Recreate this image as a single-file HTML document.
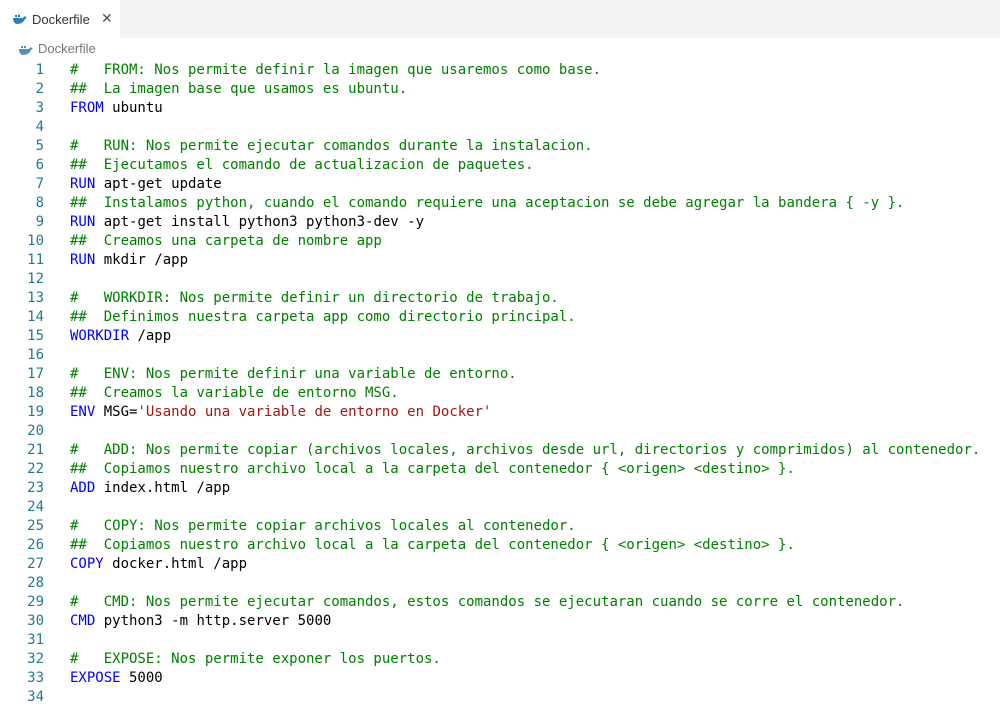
<!DOCTYPE html>
<html><head><meta charset="utf-8"><style>
body{margin:0;width:1000px;height:696px;overflow:hidden;background:#fff;font-family:"Liberation Sans",sans-serif;}
.tabs{height:38px;background:#f3f3f3;position:relative;}
.tab{position:absolute;left:0;top:0;width:120px;height:38px;background:#fff;font-size:13px;color:#333;}
.tab span{position:absolute;left:32px;top:12px;}
.tab .x{left:101px;top:11px;font-size:14px;color:#555;font-family:"DejaVu Sans",sans-serif;font-weight:normal;}
.crumb{position:absolute;top:41px;left:38px;font-size:13px;color:#777;}
.whale{position:absolute;}
.code{position:absolute;top:61px;left:0;font-family:"DejaVu Sans Mono",monospace;font-size:14px;}
.l{height:19px;line-height:19px;white-space:pre;position:relative;}
.n{position:absolute;left:0;width:44px;text-align:right;color:#237893;}
.t{position:absolute;left:70px;color:#000;}
.c{color:#008000}.k{color:#0000ff}.s{color:#a31515}
</style></head><body>
<div class="tabs"><div class="tab">
<svg class="whale" style="left:13px;top:14px" width="14" height="10" viewBox="0 0 14 10"><path d="M0 4h10c1-2 2-2 3-1l1 1c-1 0-2 1-2 1-1 3-4 5-8 5C2 10 0 8 0 4z" fill="#2b7fb5"/><rect x="2" y="1" width="2" height="2" fill="#2b7fb5"/><rect x="5" y="1" width="2" height="2" fill="#2b7fb5"/><rect x="5" y="-1" width="2" height="1.5" fill="#2b7fb5"/></svg>
<span>Dockerfile</span><span class="x">✕</span></div></div>
<svg class="whale" style="left:19px;top:45px" width="14" height="10" viewBox="0 0 14 10"><path d="M0 4h10c1-2 2-2 3-1l1 1c-1 0-2 1-2 1-1 3-4 5-8 5C2 10 0 8 0 4z" fill="#5a8fb5"/><rect x="2" y="1" width="2" height="2" fill="#5a8fb5"/><rect x="5" y="1" width="2" height="2" fill="#5a8fb5"/></svg>
<div class="crumb">Dockerfile</div>
<div class="code">
<div class="l"><span class="n">1</span><span class="t c">#   FROM: Nos permite definir la imagen que usaremos como base.</span></div>
<div class="l"><span class="n">2</span><span class="t c">##  La imagen base que usamos es ubuntu.</span></div>
<div class="l"><span class="n">3</span><span class="t"><span class="k">FROM</span> ubuntu</span></div>
<div class="l"><span class="n">4</span></div>
<div class="l"><span class="n">5</span><span class="t c">#   RUN: Nos permite ejecutar comandos durante la instalacion.</span></div>
<div class="l"><span class="n">6</span><span class="t c">##  Ejecutamos el comando de actualizacion de paquetes.</span></div>
<div class="l"><span class="n">7</span><span class="t"><span class="k">RUN</span> apt-get update</span></div>
<div class="l"><span class="n">8</span><span class="t c">##  Instalamos python, cuando el comando requiere una aceptacion se debe agregar la bandera { -y }.</span></div>
<div class="l"><span class="n">9</span><span class="t"><span class="k">RUN</span> apt-get install python3 python3-dev -y</span></div>
<div class="l"><span class="n">10</span><span class="t c">##  Creamos una carpeta de nombre app</span></div>
<div class="l"><span class="n">11</span><span class="t"><span class="k">RUN</span> mkdir /app</span></div>
<div class="l"><span class="n">12</span></div>
<div class="l"><span class="n">13</span><span class="t c">#   WORKDIR: Nos permite definir un directorio de trabajo.</span></div>
<div class="l"><span class="n">14</span><span class="t c">##  Definimos nuestra carpeta app como directorio principal.</span></div>
<div class="l"><span class="n">15</span><span class="t"><span class="k">WORKDIR</span> /app</span></div>
<div class="l"><span class="n">16</span></div>
<div class="l"><span class="n">17</span><span class="t c">#   ENV: Nos permite definir una variable de entorno.</span></div>
<div class="l"><span class="n">18</span><span class="t c">##  Creamos la variable de entorno MSG.</span></div>
<div class="l"><span class="n">19</span><span class="t"><span class="k">ENV</span> MSG=<span class="s">'Usando una variable de entorno en Docker'</span></span></div>
<div class="l"><span class="n">20</span></div>
<div class="l"><span class="n">21</span><span class="t c">#   ADD: Nos permite copiar (archivos locales, archivos desde url, directorios y comprimidos) al contenedor.</span></div>
<div class="l"><span class="n">22</span><span class="t c">##  Copiamos nuestro archivo local a la carpeta del contenedor { &lt;origen&gt; &lt;destino&gt; }.</span></div>
<div class="l"><span class="n">23</span><span class="t"><span class="k">ADD</span> index.html /app</span></div>
<div class="l"><span class="n">24</span></div>
<div class="l"><span class="n">25</span><span class="t c">#   COPY: Nos permite copiar archivos locales al contenedor.</span></div>
<div class="l"><span class="n">26</span><span class="t c">##  Copiamos nuestro archivo local a la carpeta del contenedor { &lt;origen&gt; &lt;destino&gt; }.</span></div>
<div class="l"><span class="n">27</span><span class="t"><span class="k">COPY</span> docker.html /app</span></div>
<div class="l"><span class="n">28</span></div>
<div class="l"><span class="n">29</span><span class="t c">#   CMD: Nos permite ejecutar comandos, estos comandos se ejecutaran cuando se corre el contenedor.</span></div>
<div class="l"><span class="n">30</span><span class="t"><span class="k">CMD</span> python3 -m http.server 5000</span></div>
<div class="l"><span class="n">31</span></div>
<div class="l"><span class="n">32</span><span class="t c">#   EXPOSE: Nos permite exponer los puertos.</span></div>
<div class="l"><span class="n">33</span><span class="t"><span class="k">EXPOSE</span> 5000</span></div>
<div class="l"><span class="n">34</span></div>
</div>
</body></html>
